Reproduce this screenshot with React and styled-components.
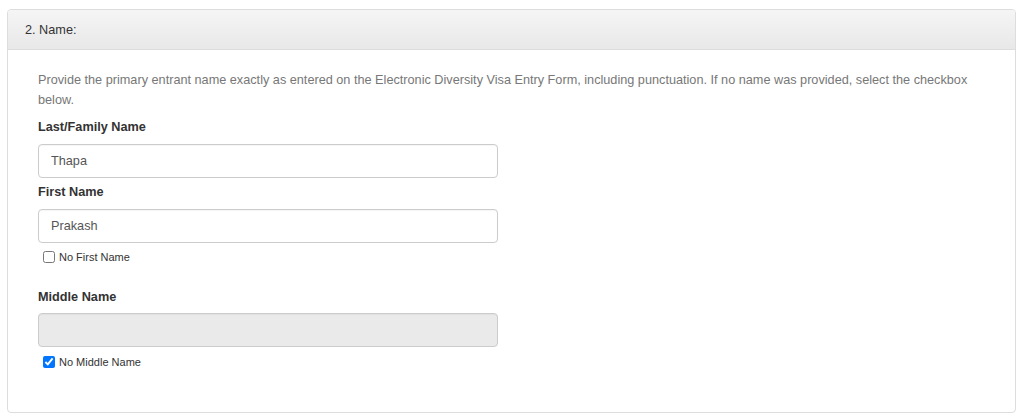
import React from 'react';
import styled, { createGlobalStyle } from 'styled-components';

const GlobalStyle = createGlobalStyle`
  body {
    margin: 0;
    background: #fff;
    font-family: "Liberation Sans", Arial, sans-serif;
    font-size: 12.7px;
    color: #333;
  }
`;

export default function App() {
  return (
    <Page>
      <GlobalStyle />
      <Panel>
        <Header>2. Name:</Header>
        <Body>
          <Intro>
            Provide the primary entrant name exactly as entered on the Electronic
            Diversity Visa Entry Form, including punctuation. If no name was
            provided, select the checkbox below.
          </Intro>
          <Label>Last/Family Name</Label>
          <Input defaultValue="Thapa" />
          <Label gap={4}>First Name</Label>
          <Input defaultValue="Prakash" spaced />
          <Check>
            <input type="checkbox" />
            No First Name
          </Check>
          <Label gap={20} tight>Middle Name</Label>
          <Input disabled defaultValue="" />
          <Check top={5}>
            <input type="checkbox" defaultChecked />
            No Middle Name
          </Check>
        </Body>
      </Panel>
    </Page>
  );
}

const Page = styled.div`
  padding: 9px 8px 8px 7px;
`;

const Panel = styled.section`
  border: 1px solid #ddd;
  border-radius: 4px;
  background: #fff;
`;

const Header = styled.div`
  height: 39px;
  line-height: 40px;
  padding-left: 17px;
  background: linear-gradient(to bottom, #f5f5f5 0%, #e8e8e8 100%);
  border-bottom: 1px solid #ddd;
  border-radius: 3px 3px 0 0;
  color: #333;
`;

const Body = styled.div`
  padding: 20px 28px 40px 30px;
`;

const Intro = styled.p`
  margin: 0 0 7px;
  color: #777;
  line-height: 20px;
`;

const Label = styled.div`
  margin-top: ${p => p.gap || 0}px;
  margin-bottom: ${p => (p.tight ? 6 : 7)}px;
  font-weight: bold;
  color: #333;
  line-height: 20px;
`;

const Input = styled.input`
  display: block;
  box-sizing: border-box;
  width: 460px;
  height: 34px;
  margin: 0;
  padding: 0 12px;
  border: 1px solid #ccc;
  border-radius: 4px;
  font-family: inherit;
  font-size: 12.7px;
  color: #555;
  background: ${p => (p.disabled ? '#eaeaea' : '#fff')};
  box-shadow: inset 0 1px 1px rgba(0, 0, 0, 0.04);
  ${p => p.spaced && 'margin-top: 1px;'}
`;

const Check = styled.label`
  display: flex;
  align-items: center;
  gap: 4px;
  height: 20px;
  margin-top: ${p => p.top || 4}px;
  padding-left: 5px;
  font-size: 11px;
  color: #333;

  input {
    width: 12px;
    height: 12px;
    margin: 0;
  }
`;
